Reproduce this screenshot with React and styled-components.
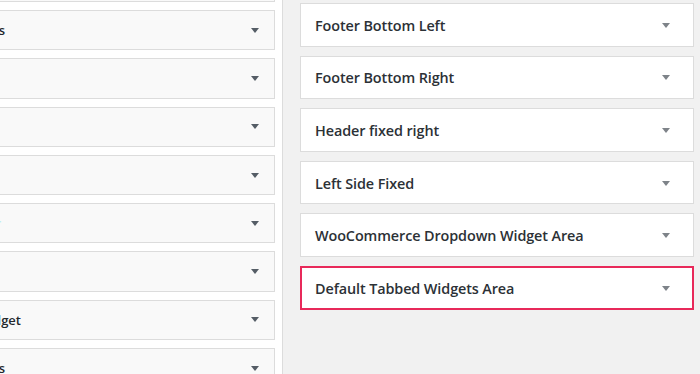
import React from 'react'
import styled, { createGlobalStyle } from 'styled-components'

const GlobalStyle = createGlobalStyle`
  html, body {
    margin: 0;
    padding: 0;
    height: 374px;
    overflow: hidden;
    background: #f1f1f1;
  }
`

const Page = styled.div`
  display: flex;
  height: 374px;
  font-family: "Open Sans", "Noto Sans", sans-serif;
  color: #23282d;
`

const LeftPane = styled.div`
  width: 282px;
  flex-shrink: 0;
  background: #fff;
  border-right: 1px solid #dcdcdc;
  overflow: hidden;
`

const LeftList = styled.div`
  display: flex;
  flex-direction: column;
  gap: 8px;
  width: 275px;
  margin-top: -38.3px;
`

const LeftCard = styled.div`
  display: flex;
  align-items: center;
  justify-content: space-between;
  height: 40.3px;
  box-sizing: border-box;
  background: #f9f9f9;
  border: 1px solid #dcdcdc;
  border-left: 0;
  padding-right: 15px;
  font-size: 13px;
  font-weight: 600;
`

const ClippedTitle = styled.div`
  display: flex;
  justify-content: flex-end;
  width: ${p => p.$end}px;
  white-space: nowrap;
  color: ${p => p.$color || '#23282d'};
`

const RightPane = styled.div`
  flex: 1;
  padding: 3px 6px 0 17px;
`

const RightList = styled.div`
  display: flex;
  flex-direction: column;
  gap: 9px;
`

const Card = styled.div`
  display: flex;
  align-items: center;
  justify-content: space-between;
  height: 43.6px;
  box-sizing: border-box;
  background: #fff;
  border: ${p => (p.$active ? '2px solid #e8295a' : '1px solid #dcdcdc')};
  padding: ${p => (p.$active ? '1px 22px 0 13px' : '1px 23px 0 14px')};
  font-size: 14.4px;
  font-weight: 600;
  letter-spacing: -0.1px;
  color: #2c3136;
`

const Arrow = styled.span`
  width: 0;
  height: 0;
  border-left: 4px solid transparent;
  border-right: 4px solid transparent;
  border-top: 5px solid ${p => p.$color};
`

const leftItems = [
  { text: '', end: 0 },
  { text: 'Footer Widgets', end: 5 },
  { text: '', end: 0 },
  { text: '', end: 0 },
  { text: '', end: 0 },
  { text: 'Sidebar', end: 1, color: '#bfeff2' },
  { text: '', end: 0 },
  { text: 'Shop Widget', end: 21 },
  { text: 'Footer Widgets', end: 5 },
]

const rightItems = [
  'Footer Bottom Left',
  'Footer Bottom Right',
  'Header fixed right',
  'Left Side Fixed',
  'WooCommerce Dropdown Widget Area',
  'Default Tabbed Widgets Area',
]

const App = () => (
  <>
    <GlobalStyle />
    <Page>
      <LeftPane>
        <LeftList>
          {leftItems.map((item, i) => (
            <LeftCard key={i}>
              <ClippedTitle $end={item.end} $color={item.color}>
                {item.text}
              </ClippedTitle>
              <Arrow $color="#555d66" />
            </LeftCard>
          ))}
        </LeftList>
      </LeftPane>
      <RightPane>
        <RightList>
          {rightItems.map((title, i) => (
            <Card key={title} $active={i === rightItems.length - 1}>
              <span>{title}</span>
              <Arrow $color="#7e8389" />
            </Card>
          ))}
        </RightList>
      </RightPane>
    </Page>
  </>
)

export default App
